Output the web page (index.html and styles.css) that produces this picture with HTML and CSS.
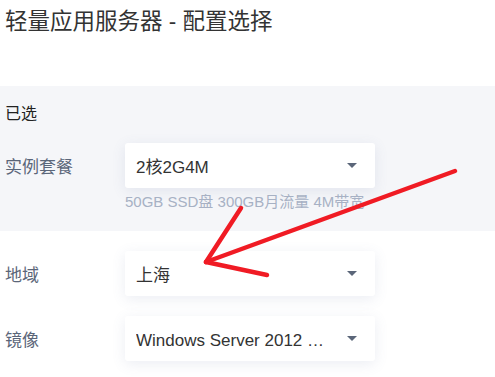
FILE: index.html
```html
<!DOCTYPE html>
<html lang="zh-CN">
<head>
  <meta charset="UTF-8" />
  <meta name="viewport" content="width=device-width, initial-scale=1" />
  <title>配置选择</title>
  <link rel="stylesheet" href="styles.css">
</head>
<body>

<div class="page">
  <h1 class="title">轻量应用服务器 - 配置选择</h1>

  <div class="selected-card">
    <div class="card-head">已选</div>
    <div class="row">
      <div class="row-label">实例套餐</div>
      <div class="select">
        <span class="select-value">2核2G4M</span>
        <span class="caret"></span>
      </div>
    </div>
    <div class="row-desc">50GB SSD盘 300GB月流量 4M带宽</div>
  </div>

  <div class="row row-plain">
    <div class="row-label">地域</div>
    <div class="select">
      <span class="select-value">上海</span>
      <span class="caret"></span>
    </div>
  </div>

  <div class="row row-plain">
    <div class="row-label">镜像</div>
    <div class="select">
      <span class="select-value">Windows Server 2012 R2 数据中心版 64位中文版</span>
      <span class="caret"></span>
    </div>
  </div>

  <!-- annotation arrow drawn over the form -->
  <svg class="annotation" width="495" height="377" viewBox="0 0 495 377">
    <g stroke="#f01b24" stroke-width="4.5" stroke-linecap="round" fill="none">
      <line x1="455" y1="171" x2="206" y2="262" />
      <line x1="241" y1="208" x2="206" y2="262" />
      <line x1="267" y1="275" x2="206" y2="262" />
    </g>
  </svg>
</div>

</body>
</html>
```

FILE: styles.css
```css
body {
  font-family: 'Liberation Sans', 'Noto Sans CJK SC', sans-serif;
  background: #fff;
  color: #333;
  margin: 0;
  padding: 0;
}

.page {
  position: relative;
  width: 495px;
  height: 377px;
  overflow: hidden;
}

.title {
  margin: 7px 0 49px;
  padding-left: 5px;
  font-size: 22.5px;
  font-weight: 400;
  line-height: 30px;
  color: #333;
}

.selected-card {
  background: #f5f6f9;
  padding: 17px 0 20px 5px;
}

.card-head {
  font-size: 16px;
  line-height: 22px;
  color: #222;
  margin-bottom: 18px;
}

.row {
  display: flex;
  align-items: center;
}

.row-plain {
  padding-left: 5px;
  margin-top: 20px;
}

.row-label {
  width: 120px;
  font-size: 17px;
  color: #5b6679;
}

.select {
  width: 250px;
  height: 45px;
  box-sizing: border-box;
  background: #fff;
  border-radius: 3px;
  box-shadow: 0 3px 14px rgba(90, 110, 160, 0.12);
  display: flex;
  align-items: center;
  padding: 0 18px 0 11px;
}

.select-value {
  flex: 1;
  min-width: 0;
  font-size: 17px;
  color: #333;
  white-space: nowrap;
  overflow: hidden;
  text-overflow: ellipsis;
  margin-right: 16px;
}

.caret {
  width: 0;
  height: 0;
  border-left: 5px solid transparent;
  border-right: 5px solid transparent;
  border-top: 5px solid #5b6679;
}

.row-desc {
  margin: 5px 0 0 120px;
  font-size: 15px;
  line-height: 18px;
  color: #a7b1c4;
}

.annotation {
  position: absolute;
  top: 0;
  left: 0;
  pointer-events: none;
}
```
